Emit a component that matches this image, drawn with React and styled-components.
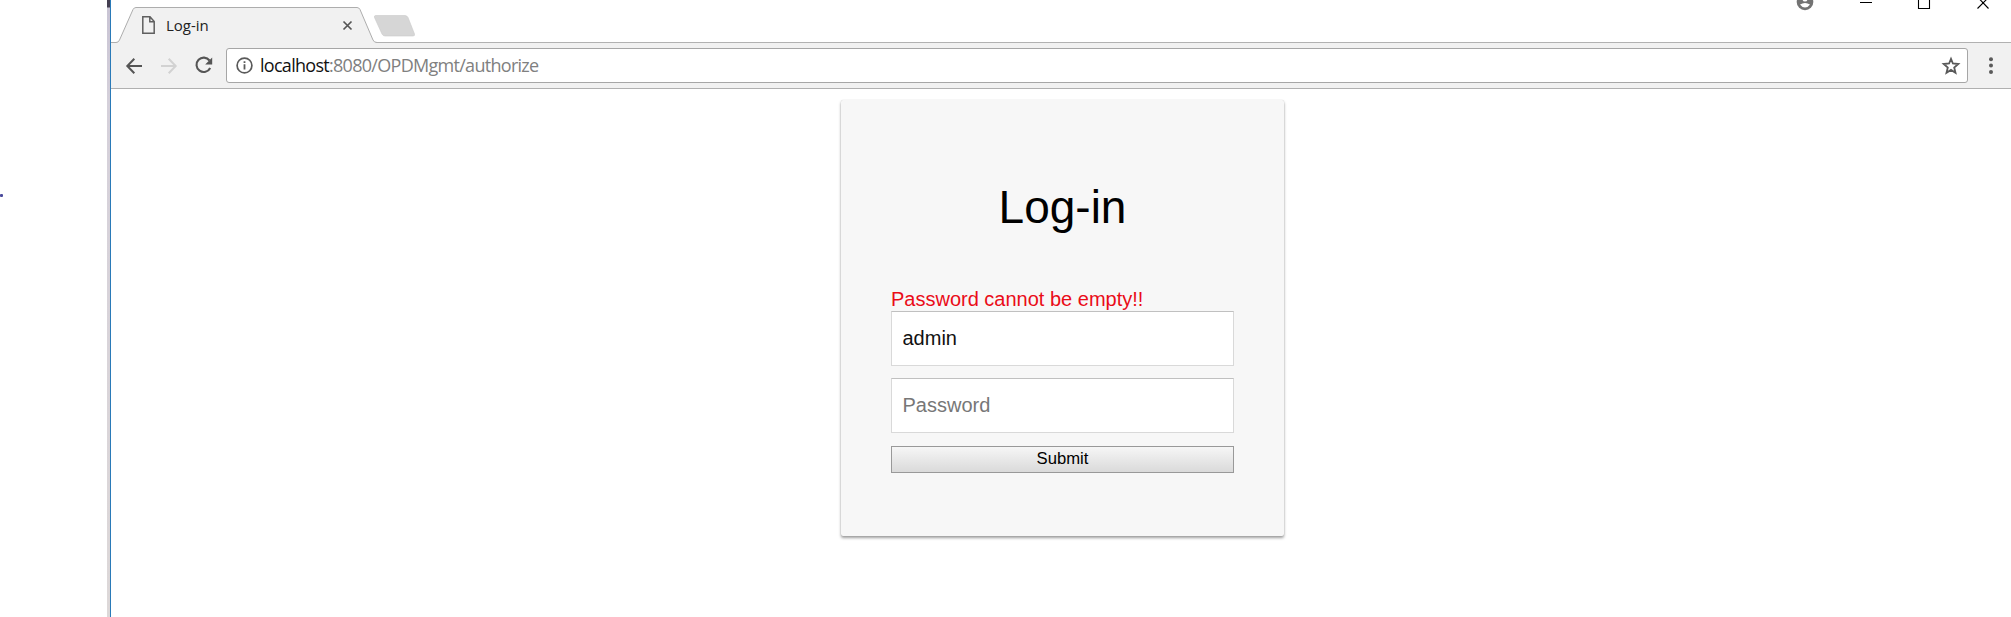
import React from 'react';
import styled, { createGlobalStyle } from 'styled-components';

const GlobalStyle = createGlobalStyle`
  * { box-sizing: border-box; }
  html, body { margin: 0; background: #fff; overflow: hidden; }
`;

const Desktop = styled.div`
  display: flex;
  width: 2011px;
  height: 617px;
  overflow: hidden;
  font-family: "Liberation Sans", Arial, sans-serif;
`;

const Backdrop = styled.div`
  position: relative;
  width: 107px;
  flex: none;
`;

const Speck = styled.span`
  position: absolute;
  left: 0;
  top: 194px;
  width: 3px;
  height: 3px;
  border-radius: 1px;
  background: #4a4a9c;
`;

const WindowShadow = styled.div`
  width: 3px;
  flex: none;
  background: linear-gradient(#443e50 0 7px, #c9c4d4 8px, #d5d0da 100px, #ddd8d8);
`;

const Window = styled.div`
  flex: 1;
  display: flex;
  flex-direction: column;
  border-left: 1px solid #2a7ab8;
`;

const TitleBar = styled.header`
  display: flex;
  justify-content: space-between;
  height: 43px;
  flex: none;
  box-shadow: inset 0 -1px #b1b1b1;
`;

const TabStrip = styled.div`
  display: flex;
`;

const Tab = styled.div`
  position: relative;
  display: flex;
  align-items: center;
  width: 266px;
  height: 36px;
  margin-top: 7px;
  padding: 0 25.5px 0 31px;
`;

const TabShape = styled.svg`
  position: absolute;
  inset: 0;
`;

const TabTitle = styled.span`
  position: relative;
  flex: 1;
  margin: 0 0 1px 11px;
  font: 15px/20px "Open Sans", sans-serif;
  color: #222;
`;

const Icon = styled.svg`
  position: relative;
  display: block;
  flex: none;
  overflow: visible;
`;

const NewTab = styled(Icon)`
  margin: 15px 0 0 -4px;
`;

const Controls = styled.div`
  display: flex;
  align-items: flex-start;
`;

const Toolbar = styled.nav`
  display: flex;
  align-items: center;
  height: 46px;
  flex: none;
  padding-left: 15px;
  background: #f1f1f1;
  border-bottom: 1px solid #b0b0b0;
`;

const NavButtons = styled.div`
  display: flex;
  align-items: center;
  gap: 18.5px;
  width: 100px;
`;

const AddressBar = styled.div`
  display: flex;
  align-items: center;
  width: 1742px;
  height: 35px;
  margin-right: 1px;
  padding: 0 7px 0 9px;
  background: #fff;
  border: 1px solid #a6a6a6;
  border-radius: 3px;
`;

const Url = styled.div`
  flex: 1;
  margin: 0 0 1px 7px;
  font: 18px/24px "Open Sans", sans-serif;
  letter-spacing: -0.71px;
  color: #808080;
`;

const Host = styled.span`
  color: #111;
`;

const Page = styled.main`
  flex: 1;
  padding: 11px 0 0 730px;
`;

const Card = styled.form`
  display: flex;
  flex-direction: column;
  width: 443px;
  height: 436px;
  padding: 0 50px;
  background: #f7f7f7;
  border-radius: 2px;
  box-shadow: 0 2px 3px rgba(0, 0, 0, 0.38), 0 0 1px rgba(0, 0, 0, 0.2);
`;

const Heading = styled.h1`
  margin: 80px 0 0;
  font-size: 46px;
  font-weight: 400;
  line-height: 54px;
  text-align: center;
  color: #000;
`;

const ErrorText = styled.div`
  margin-top: 54px;
  font-size: 20px;
  line-height: 23px;
  color: #ea0c18;
`;

const Field = styled.input`
  width: 343px;
  height: 55px;
  margin: 0 0 12px;
  padding: 0 10.5px;
  border: 1px solid #d9d9d9;
  border-top-color: #c0c0c0;
  border-radius: 0;
  background: #fff;
  font: 20px "Liberation Sans", Arial, sans-serif;
  color: #111;
  outline: none;
  &::placeholder { color: #777; opacity: 1; }
`;

const Submit = styled.button`
  width: 343px;
  height: 27px;
  margin-top: 1px;
  padding: 0 0 2px;
  border: 1px solid #999;
  border-radius: 0;
  background: linear-gradient(#f6f6f6, #dadada);
  font: 16.67px "Liberation Sans", Arial, sans-serif;
  color: #000;
`;

export default function App() {
  return (
    <>
      <GlobalStyle />
      <Desktop>
        <Backdrop><Speck /></Backdrop>
        <WindowShadow />
        <Window>
          <TitleBar>
            <TabStrip>
              <Tab>
                <TabShape width="266" height="36">
                  <path d="M0 36V35.5H5Q7.5 35.5 8.5 33L22 2.5Q23 .5 25 .5H246Q248 .5 249 2.5L262 33Q263 35.5 266 35.5V36Z" fill="#f1f1f1" />
                  <path d="M0 35.5H5Q7.5 35.5 8.5 33L22 2.5Q23 .5 25 .5H246Q248 .5 249 2.5L262 33Q263 35.5 266 35.5" fill="none" stroke="#adadad" />
                </TabShape>
                <Icon width="13" height="18" viewBox="0 0 13 18" fill="none" stroke="#5f5f5f" strokeWidth="1.5">
                  <path d="M.8.8H8L12.2 5.5V17.2H.8ZM7.8 1V5.8H12" />
                </Icon>
                <TabTitle>Log-in</TabTitle>
                <Icon width="9" height="9" viewBox="0 0 9 9" stroke="#555" strokeWidth="1.7">
                  <path d="M.5.5 8.5 8.5M8.5.5.5 8.5" />
                </Icon>
              </Tab>
              <NewTab width="43" height="22" viewBox="0 0 43 22">
                <path d="M2.5.5H32Q34 .5 35 2.5L41.5 19Q42 21 40 21H12Q10 21 9 19L1.5 2.5Q1 .5 2.5.5Z" fill="#d6d6d6" stroke="#c9c9c9" strokeWidth=".6" />
              </NewTab>
            </TabStrip>
            <Controls>
              <Icon width="214" height="12" viewBox="0 0 214 12">
                <circle cx="8" cy="2" r="8.3" fill="#737373" />
                <path d="M3 4.5Q8 1.5 13 4.5Q11 7.5 8 7.5Q5 7.5 3 4.5Z" fill="#fff" />
                <circle cx="8" cy="-1" r="2.5" fill="#fff" />
                <path d="M63 2.5H75M121.5-2V8.5H132.5V-2M181-2.5 191.5 8.5M191.5-2.5 180.5 8.5" fill="none" stroke="#000" strokeWidth="1.1" />
              </Icon>
            </Controls>
          </TitleBar>
          <Toolbar>
            <NavButtons>
              <Icon width="16" height="16" viewBox="0 0 16 16" fill="none" stroke="#555" strokeWidth="2">
                <path d="M16 8H1.5M8.3.8 1.3 8 8.3 15.2" />
              </Icon>
              <Icon width="16" height="16" viewBox="0 0 16 16" fill="none" stroke="#d2d2d2" strokeWidth="2">
                <path d="M0 8H14.5M7.7.8 14.7 8 7.7 15.2" />
              </Icon>
              <Icon width="18" height="17" viewBox="0 0 18 17">
                <path d="M14.5 3.5A7.2 7.2 0 1 0 15.2 11" fill="none" stroke="#555" strokeWidth="2.1" />
                <path d="M17.2.5V7.5H10.2Z" fill="#555" />
              </Icon>
            </NavButtons>
            <AddressBar>
              <Icon width="17" height="17" viewBox="0 0 17 17">
                <circle cx="8.5" cy="8.5" r="7.4" fill="none" stroke="#5a5a5a" strokeWidth="1.7" />
                <path d="M7.6 7.3H9.4V12.5H7.6ZM7.6 4.2H9.4V6H7.6Z" fill="#5a5a5a" />
              </Icon>
              <Url><Host>localhost</Host>:8080/OPDMgmt/authorize</Url>
              <Icon width="18" height="17" viewBox="0 0 18 17" fill="none" stroke="#5a5a5a" strokeWidth="1.8">
                <path d="M9 1.8 10.9 6.5 16.3 7 12.2 10.5 13.5 15.7 9 12.9 4.5 15.7 5.8 10.5 1.7 7 7.1 6.5Z" />
              </Icon>
            </AddressBar>
            <Icon width="42" height="18" viewBox="0 0 42 18" fill="#5a5a5a">
              <circle cx="22" cy="2.3" r="2" />
              <circle cx="22" cy="8.6" r="2" />
              <circle cx="22" cy="14.9" r="2" />
            </Icon>
          </Toolbar>
          <Page>
            <Card onSubmit={(e) => e.preventDefault()}>
              <Heading>Log-in</Heading>
              <ErrorText>Password cannot be empty!!</ErrorText>
              <Field type="text" defaultValue="admin" />
              <Field type="password" placeholder="Password" />
              <Submit type="submit">Submit</Submit>
            </Card>
          </Page>
        </Window>
      </Desktop>
    </>
  );
}
